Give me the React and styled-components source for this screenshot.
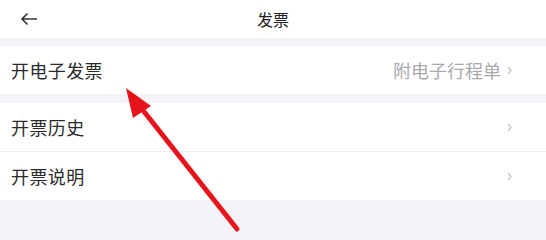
import React from "react";
import styled, { createGlobalStyle } from "styled-components";

const GlobalStyle = createGlobalStyle`
  html, body {
    margin: 0;
    padding: 0;
    background: #f4f4f8;
    font-family: "Noto Sans CJK SC", "Noto Sans", sans-serif;
  }
`;

const Page = styled.div`
  position: relative;
  width: 546px;
  height: 236px;
  overflow: hidden;
  background: #f4f4f8;
`;

const Header = styled.div`
  height: 38px;
  background: #fff;
  display: grid;
  grid-template-columns: 60px 1fr 60px;
  align-items: center;
`;

const Back = styled.div`
  display: flex;
  align-items: center;
  padding-left: 20px;
`;

const Title = styled.div`
  text-align: center;
  font-size: 16px;
  color: #222;
`;

const Group = styled.div`
  margin-top: ${(p) => p.gap}px;
  background: #fff;
`;

const Row = styled.div`
  height: 48px;
  display: flex;
  align-items: center;
  justify-content: space-between;
  padding: 0 34px 0 11px;
  border-top: ${(p) => (p.divided ? "1px solid #ececef" : "none")};
`;

const Label = styled.div`
  font-size: 18px;
  letter-spacing: 0.4px;
  color: #2b2b2b;
`;

const Extra = styled.div`
  display: flex;
  align-items: center;
  gap: 6px;
  font-size: 18px;
  color: #a9a9ad;
`;

const Overlay = styled.svg`
  position: absolute;
  left: 0;
  top: 0;
  pointer-events: none;
`;

const Chevron = () => (
  <svg width="5" height="9" viewBox="0 0 5 9">
    <path d="M1 1l3 3.5-3 3.5" fill="none" stroke="#b0b0b4" strokeWidth="1.1" />
  </svg>
);

const App = () => (
  <>
    <GlobalStyle />
    <Page>
      <Header>
        <Back>
          <svg width="18" height="14" viewBox="0 0 18 14">
            <path
              d="M17 7H2M7.5 1.5L2 7l5.5 5.5"
              fill="none"
              stroke="#333"
              strokeWidth="1.6"
            />
          </svg>
        </Back>
        <Title>发票</Title>
        <div />
      </Header>
      <Group gap={8}>
        <Row>
          <Label>开电子发票</Label>
          <Extra>
            附电子行程单
            <Chevron />
          </Extra>
        </Row>
      </Group>
      <Group gap={9}>
        <Row>
          <Label>开票历史</Label>
          <Chevron />
        </Row>
        <Row divided>
          <Label>开票说明</Label>
          <Chevron />
        </Row>
      </Group>
      <Overlay width="546" height="236" viewBox="0 0 546 236">
        <line
          x1="237"
          y1="229"
          x2="138"
          y2="104"
          stroke="#e8141b"
          strokeWidth="5"
          strokeLinecap="round"
        />
        <polygon points="126,88 151,106 133,118" fill="#e8141b" />
      </Overlay>
    </Page>
  </>
);

export default App;
